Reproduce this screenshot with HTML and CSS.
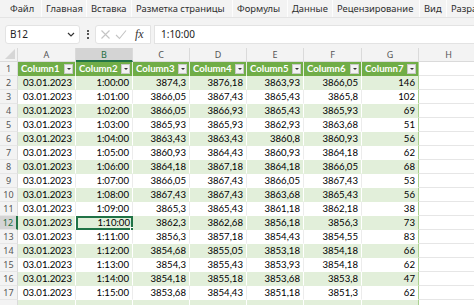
FILE: index.html
```html
<!DOCTYPE html>
<html lang="ru">
<head>
<meta charset="utf-8">
<link rel="stylesheet" href="styles.css">
</head>
<body>
<div class="tabs">
  <div class="tab first">Файл</div>
  <div class="tab">Главная</div>
  <div class="tab">Вставка</div>
  <div class="tab">Разметка страницы</div>
  <div class="tab">Формулы</div>
  <div class="tab">Данные</div>
  <div class="tab">Рецензирование</div>
  <div class="tab">Вид</div>
  <div class="tab last">Разработчик</div>
</div>
<div class="fbar">
  <div class="namebox"><span>B12</span>
    <svg class="chev" width="8" height="5" viewBox="0 0 8 5"><path d="M1 1 L4 4 L7 1" fill="none" stroke="#333" stroke-width="1.2"/></svg>
  </div>
  <div class="dots"><i></i><i></i><i></i></div>
  <div class="fxbox">
    <svg width="11" height="11" viewBox="0 0 11 11"><path d="M1.5 1.5 L9.5 9.5 M9.5 1.5 L1.5 9.5" stroke="#c4c4c4" stroke-width="1.1" fill="none"/></svg>
    <svg width="12" height="11" viewBox="0 0 12 11"><path d="M1 6 L4.5 9.5 L11 1.5" stroke="#c4c4c4" stroke-width="1.1" fill="none"/></svg>
    <span class="fx">fx</span>
  </div>
  <div class="finput">1:10:00</div>
</div>
<div class="sheet">
  <div class="corner"><svg width="10" height="10" viewBox="0 0 10 10"><path d="M10 0 L10 10 L0 10 Z" fill="#d6d6d6"/></svg></div>
  <div class="ch">A</div><div class="ch sel">B</div><div class="ch">C</div><div class="ch">D</div><div class="ch">E</div><div class="ch">F</div><div class="ch">G</div><div class="ch">H</div>

  <div class="rh">1</div>
  <div class="th">Column1<b></b></div><div class="th">Column2<b></b></div><div class="th">Column3<b></b></div><div class="th">Column4<b></b></div><div class="th">Column5<b></b></div><div class="th">Column6<b></b></div><div class="th last">Column7<b></b></div><div class="c"></div>

  <div class="rh">2</div><div class="c g">03.01.2023</div><div class="c g">1:00:00</div><div class="c g">3874,3</div><div class="c g">3876,18</div><div class="c g">3863,93</div><div class="c g">3866,05</div><div class="c g last">146</div><div class="c"></div>
  <div class="rh">3</div><div class="c w">03.01.2023</div><div class="c w">1:01:00</div><div class="c w">3866,05</div><div class="c w">3867,43</div><div class="c w">3865,43</div><div class="c w">3865,8</div><div class="c w last">102</div><div class="c"></div>
  <div class="rh">4</div><div class="c g">03.01.2023</div><div class="c g">1:02:00</div><div class="c g">3866,05</div><div class="c g">3866,93</div><div class="c g">3865,43</div><div class="c g">3865,93</div><div class="c g last">69</div><div class="c"></div>
  <div class="rh">5</div><div class="c w">03.01.2023</div><div class="c w">1:03:00</div><div class="c w">3865,93</div><div class="c w">3865,93</div><div class="c w">3862,93</div><div class="c w">3863,68</div><div class="c w last">51</div><div class="c"></div>
  <div class="rh">6</div><div class="c g">03.01.2023</div><div class="c g">1:04:00</div><div class="c g">3863,43</div><div class="c g">3863,43</div><div class="c g">3860,8</div><div class="c g">3860,93</div><div class="c g last">56</div><div class="c"></div>
  <div class="rh">7</div><div class="c w">03.01.2023</div><div class="c w">1:05:00</div><div class="c w">3860,93</div><div class="c w">3864,43</div><div class="c w">3860,93</div><div class="c w">3864,18</div><div class="c w last">62</div><div class="c"></div>
  <div class="rh">8</div><div class="c g">03.01.2023</div><div class="c g">1:06:00</div><div class="c g">3864,18</div><div class="c g">3867,18</div><div class="c g">3864,18</div><div class="c g">3866,05</div><div class="c g last">68</div><div class="c"></div>
  <div class="rh">9</div><div class="c w">03.01.2023</div><div class="c w">1:07:00</div><div class="c w">3866,05</div><div class="c w">3867,43</div><div class="c w">3866,05</div><div class="c w">3867,43</div><div class="c w last">53</div><div class="c"></div>
  <div class="rh">10</div><div class="c g">03.01.2023</div><div class="c g">1:08:00</div><div class="c g">3867,43</div><div class="c g">3867,43</div><div class="c g">3863,68</div><div class="c g">3865,43</div><div class="c g last">56</div><div class="c"></div>
  <div class="rh">11</div><div class="c w">03.01.2023</div><div class="c w">1:09:00</div><div class="c w">3865,3</div><div class="c w">3865,43</div><div class="c w">3861,18</div><div class="c w">3862,18</div><div class="c w last">38</div><div class="c"></div>
  <div class="rh selr">12</div><div class="c g">03.01.2023</div><div class="c g active">1:10:00<i class="handle"></i></div><div class="c g">3862,3</div><div class="c g">3862,68</div><div class="c g">3856,18</div><div class="c g">3856,3</div><div class="c g last">73</div><div class="c"></div>
  <div class="rh">13</div><div class="c w">03.01.2023</div><div class="c w">1:11:00</div><div class="c w">3856,3</div><div class="c w">3857,18</div><div class="c w">3854,43</div><div class="c w">3854,55</div><div class="c w last">83</div><div class="c"></div>
  <div class="rh">14</div><div class="c g">03.01.2023</div><div class="c g">1:12:00</div><div class="c g">3854,68</div><div class="c g">3855,05</div><div class="c g">3853,18</div><div class="c g">3854,18</div><div class="c g last">66</div><div class="c"></div>
  <div class="rh">15</div><div class="c w">03.01.2023</div><div class="c w">1:13:00</div><div class="c w">3854,3</div><div class="c w">3855,43</div><div class="c w">3853,93</div><div class="c w">3854,18</div><div class="c w last">62</div><div class="c"></div>
  <div class="rh">16</div><div class="c g">03.01.2023</div><div class="c g">1:14:00</div><div class="c g">3854,18</div><div class="c g">3855,18</div><div class="c g">3853,68</div><div class="c g">3853,8</div><div class="c g last">47</div><div class="c"></div>
  <div class="rh">17</div><div class="c w">03.01.2023</div><div class="c w">1:15:00</div><div class="c w">3853,68</div><div class="c w">3854,43</div><div class="c w">3851,18</div><div class="c w">3851,3</div><div class="c w last">62</div><div class="c"></div>
  <div class="rh"></div><div class="c g"></div><div class="c g"></div><div class="c g"></div><div class="c g"></div><div class="c g"></div><div class="c g"></div><div class="c g last"></div><div class="c"></div>
</div>
</body>
</html>
```
FILE: styles.css
```css
* { box-sizing: border-box; }
html, body { margin: 0; padding: 0; }
body {
  width: 474px;
  height: 305px;
  overflow: hidden;
  background: #fff;
  font-family: "Noto Sans", sans-serif;
}
.tabs {
  display: grid;
  grid-template-columns: 42px 45px 45px 101px 55px 45px 87px 27px 1fr;
  height: 17px;
  background: #f3f3f3;
}
.tab {
  font-size: 9.4px;
  line-height: 17px;
  color: #2e2e2e;
  padding-left: 4px;
  border-right: 1px solid #fdfdfd;
  white-space: nowrap;
  overflow: hidden;
}
.tab.first { padding-left: 10px; }
.tab.last { border-right: 0; }

.fbar {
  display: flex;
  align-items: center;
  height: 31px;
  padding: 5px 0 3px 5px;
  background: #f3f3f3;
  border-top: 1px solid #e4e4e4;
}
.namebox {
  width: 75px;
  height: 19px;
  background: #fff;
  border: 1px solid #e3e3e3;
  border-radius: 3px;
  display: flex;
  align-items: center;
  justify-content: space-between;
  padding: 0 4px 0 4px;
  font-size: 10px;
  color: #222;
}
.dots {
  width: 15px;
  display: flex;
  flex-direction: column;
  align-items: center;
  gap: 1.5px;
}
.dots i {
  width: 2px;
  height: 2px;
  background: #555;
  display: block;
}
.fxbox {
  width: 56px;
  height: 19px;
  background: #fff;
  border: 1px solid #e3e3e3;
  border-radius: 3px 0 0 3px;
  display: flex;
  align-items: center;
  gap: 4px;
  padding-left: 4px;
}
.fx {
  font-family: "Liberation Serif", serif;
  font-style: italic;
  font-size: 12px;
  color: #333;
  margin-left: 4px;
}
.finput {
  flex: 1;
  height: 19px;
  margin-left: 3px;
  background: #fff;
  border: 1px solid #e3e3e3;
  border-right: 0;
  font-size: 10px;
  line-height: 17px;
  padding-left: 6px;
  color: #222;
}

.sheet {
  display: grid;
  grid-template-columns: 18px 58px 57px 57px 57px 57px 58px 57px 60px;
  grid-template-rows: 14px;
  grid-auto-rows: 14px;
  font-family: "Lato", sans-serif;
  font-size: 9.6px;
}
.corner {
  background: #f3f3f3;
  border-right: 1px solid #dadada;
  border-bottom: 1px solid #dadada;
  display: flex;
  align-items: flex-end;
  justify-content: flex-end;
  padding: 0 2px 2px 0;
}
.ch {
  background: #f3f3f3;
  color: #555;
  text-align: center;
  line-height: 13px;
  border-right: 1px solid #dadada;
  border-bottom: 1px solid #dadada;
  font-family: "Noto Sans", sans-serif;
  font-size: 9px;
}
.ch.sel {
  background: #d4d4d4;
  color: #1f6e3f;
  border-bottom: 2px solid #217346;
}
.rh {
  background: #f3f3f3;
  color: #555;
  text-align: center;
  line-height: 14px;
  border-right: 1px solid #dadada;
  border-bottom: 1px solid #e6e6e6;
  font-family: "Noto Sans", sans-serif;
  font-size: 9px;
}
.rh.selr {
  background: #d4d4d4;
  color: #1f6e3f;
  border-right: 2px solid #217346;
}
.th {
  position: relative;
  background: #70ad47;
  color: #fff;
  font-weight: 700;
  padding-left: 3px;
  line-height: 14px;
  border-right: 1px solid #e8f0e2;
}
.th.last { border-right: 1px solid #a9d08e; }
.th b {
  position: absolute;
  right: 2px;
  top: 2px;
  width: 9px;
  height: 10px;
  background: #f2f2f2;
  border: 1px solid #c8c8c8;
}
.th b::after {
  content: "";
  position: absolute;
  left: 2px;
  top: 3px;
  border-left: 2px solid transparent;
  border-right: 2px solid transparent;
  border-top: 2px solid #333;
}
.c {
  position: relative;
  text-align: right;
  padding-right: 3px;
  line-height: 14px;
  color: #000;
  white-space: nowrap;
  border-right: 1px solid #e6e6e6;
  border-bottom: 1px solid #e6e6e6;
}
.c.g {
  background: #e2efda;
  border-right-color: #fff;
  border-bottom-color: #e2efda;
}
.c.w {
  background: #fff;
  border-right-color: #ececec;
  border-bottom-color: #fff;
}
.c.last { border-right: 1px solid #a9d08e; }
.c.active {
  border: 2px solid #217346;
  line-height: 10px;
  padding-right: 1px;
}
.handle {
  position: absolute;
  right: -4px;
  bottom: -4px;
  width: 5px;
  height: 5px;
  background: #217346;
  border: 1px solid #fff;
}
```
